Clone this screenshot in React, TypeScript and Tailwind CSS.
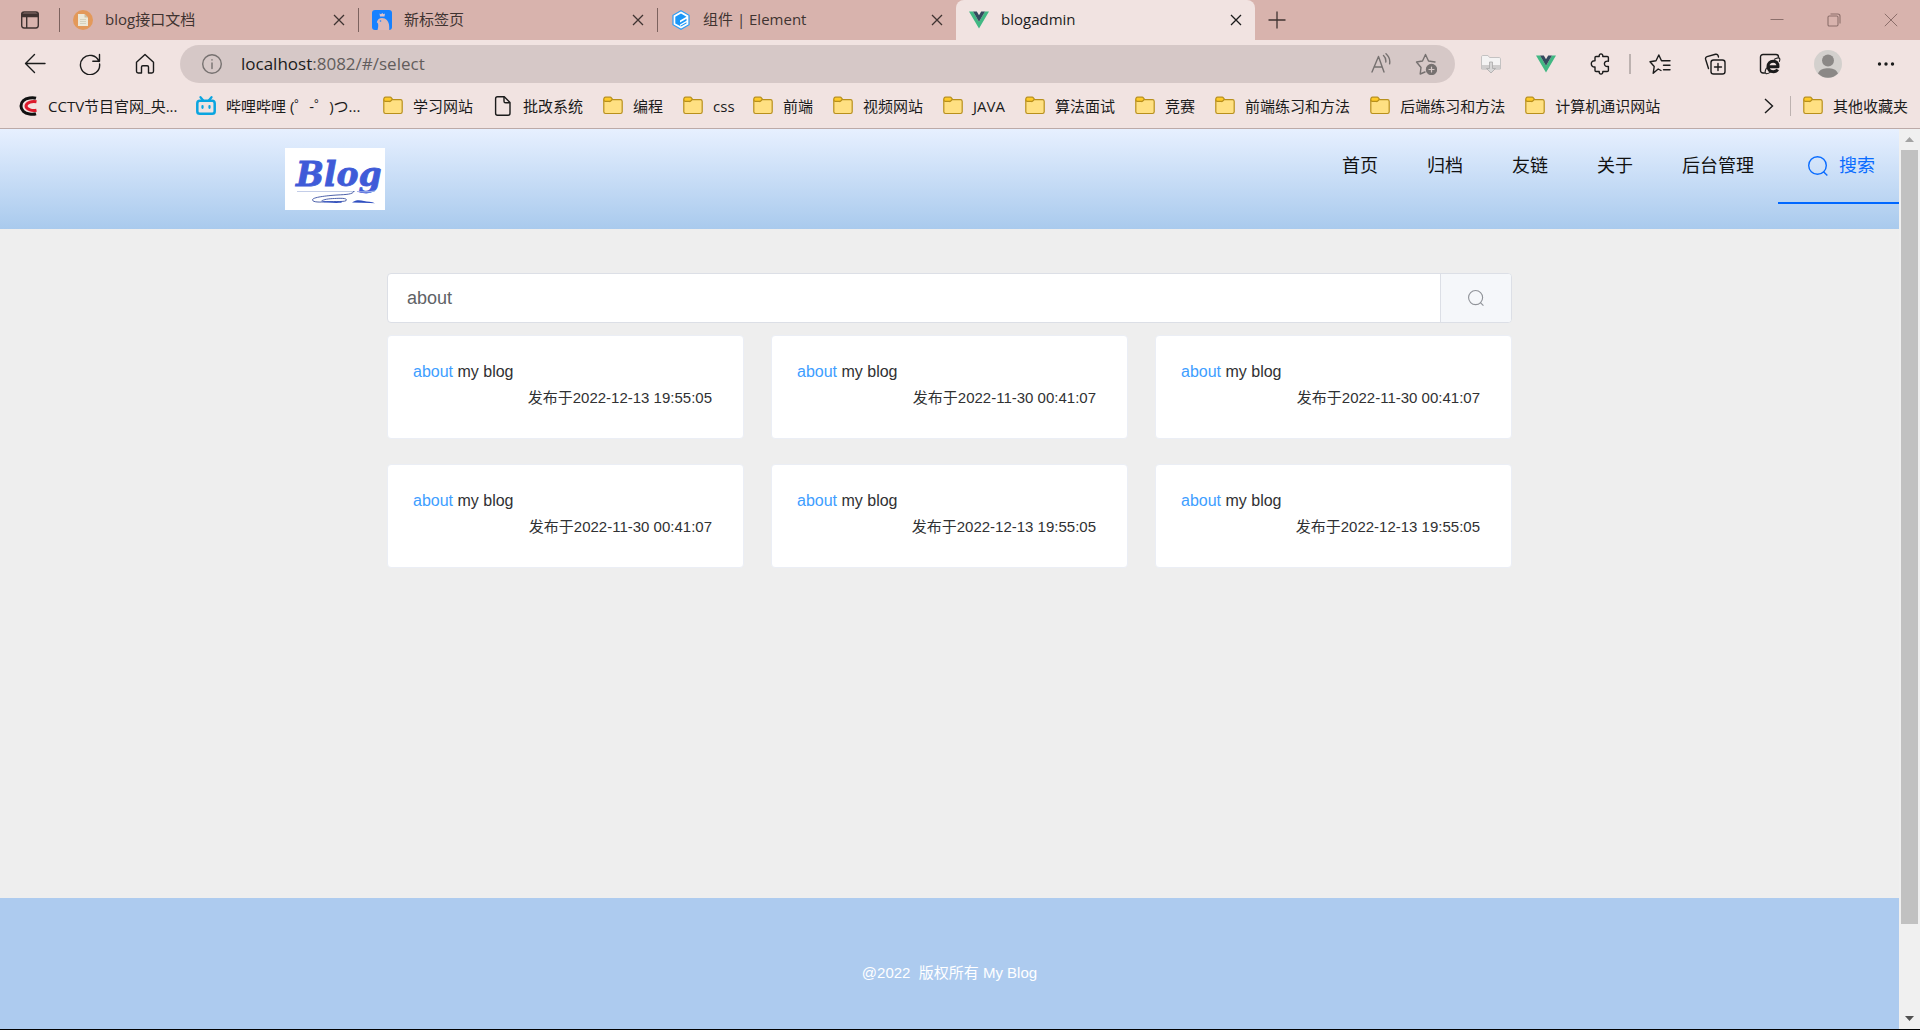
import type { ReactNode } from "react";

const UI_FONT = "font-['Open_Sans','Noto_Sans_CJK_SC',sans-serif]";
const PAGE_FONT = "font-['Liberation_Sans','Noto_Sans_CJK_SC',sans-serif]";

/* ---------- icons ---------- */

function CloseIcon() {
  return (
    <svg width="12" height="12" viewBox="0 0 12 12" stroke="currentColor" strokeWidth="1.3" fill="none">
      <path d="M1 1l10 10M11 1L1 11" />
    </svg>
  );
}

function TabActionsIcon() {
  return (
    <svg width="20" height="20" viewBox="0 0 20 20" fill="none" stroke="#3f3331" strokeWidth="1.4">
      <rect x="1.7" y="2" width="16.6" height="16" rx="2.4" />
      <path d="M2 4h16v2.5H2z" fill="#3f3331" />
      <path d="M6.7 6v12" />
    </svg>
  );
}

function DocFavicon() {
  return (
    <svg width="20" height="20" viewBox="0 0 20 20">
      <circle cx="10" cy="10" r="10" fill="#e3995a" />
      <path d="M5 4h6.500L15 7.500V16H5z" fill="#ece8d8" />
      <path d="M11.500 4v3.500H15z" fill="#c9bfa4" />
      <path d="M7 9.500h6M7 11.500h6M7 13.500h6" stroke="#cfcab6" strokeWidth=".8" />
    </svg>
  );
}

function BearFavicon() {
  return (
    <svg width="20" height="20" viewBox="0 0 20 20">
      <rect width="20" height="20" rx="3" fill="#1681ff" />
      <path d="M7.500 3.400l1.500.9 1.300-1.300 1.200 1.300 1.500-.9-.5 3.200H8z" fill="#dfc3cb" />
      <path d="M5.500 20c.7-2.500 1-4.500.5-6.500l-1.200-1.200C5.500 9.500 7.300 8 10 8c4.200 0 6.300 3 7 6.500.3 2 .3 3.600.2 5.500z" fill="#dcb9b8" />
      <circle cx="8.500" cy="11" r=".8" fill="#1681ff" />
    </svg>
  );
}

function ElementFavicon() {
  return (
    <svg width="20" height="20" viewBox="0 0 20 20">
      <path d="M10 .8l8 4.500v9.400l-8 4.500-8-4.500V5.300z" fill="#fff" stroke="#2c9cf5" strokeWidth="1.200" />
      <path d="M10 3.600l5.500 3.200L9 10.600v1.900l6.500-3.700v1.900L9 14.400v1.500l6.500-3.600v1.100L10 16.600l-5.700-3.200V6.800z" fill="#1b97f7" />
    </svg>
  );
}

function VueLogo() {
  return (
    <svg width="20" height="20" viewBox="0 0 20 20">
      <path d="M0 1.500h4l6 10.300 6-10.300h4l-10 17z" fill="#41b883" />
      <path d="M4 1.500h3.800L10 5.300l2.200-3.800H16l-6 10.300z" fill="#34495e" />
    </svg>
  );
}

function FolderIcon() {
  return (
    <svg width="20" height="20" viewBox="0 0 20 20" strokeWidth="1.200">
      <path d="M.8 4v11.800c0 1 .7 1.700 1.700 1.700h15c1 0 1.700-.7 1.700-1.700V5.400c0-1-.7-1.700-1.700-1.700H8.500L6.800 5.600z" fill="#ffe082" stroke="#b8901c" />
      <path d="M2.500 1.200h4.700c.5 0 1 .4 1.400.9l.7.9c-.6 1.300-1.300 2.300-2.600 2.300H2.300C1.300 5.300.8 4.500.8 3.400S1.400 1.200 2.500 1.200z" fill="#ffca28" stroke="#b8901c" />
    </svg>
  );
}

function CctvIcon() {
  return (
    <svg width="20" height="20" viewBox="0 0 20 20" fill="none">
      <path d="M18 2.200c-2-.6-4-.6-6.500-.2C6.500 2.800 3 5.800 3 10s3.500 7.200 8.500 8c2.500.4 4.500.4 6.500-.2" stroke="#111" strokeWidth="3" />
      <path d="M18.500 5.800c-2-.4-4.500-.4-6.500.3-2.600.9-4 2.200-4 3.900s1.400 3 4 3.900c2 .7 4.500.7 6.500.3" stroke="#dc1a2c" strokeWidth="3" />
    </svg>
  );
}

function BiliIcon() {
  return (
    <svg width="20" height="20" viewBox="0 0 20 20" fill="none" stroke="#0aa5e0" strokeLinecap="round">
      <path d="M4.500 1.200l2.500 3M15.500 1.200l-2.500 3" strokeWidth="2.200" />
      <rect x="1.300" y="4.800" width="17.400" height="13" rx="2.600" strokeWidth="2.500" />
      <path d="M6.500 10v1.800M13.500 10v1.800" strokeWidth="2.200" />
    </svg>
  );
}

function FileIcon() {
  return (
    <svg width="20" height="20" viewBox="0 0 20 20" fill="none" stroke="#1b1b1b" strokeWidth="1.400" strokeLinejoin="round">
      <path d="M4.500.8h6.800L17 6.500v10.800c0 1.100-.8 1.900-1.900 1.900H4.500c-1.100 0-1.900-.8-1.900-1.900V2.700C2.600 1.600 3.400.8 4.500.8z" />
      <path d="M11 1v4.200c0 1 .6 1.600 1.600 1.600h4.200" />
    </svg>
  );
}

function Line({ children, size = 22 }: { children: ReactNode; size?: number }) {
  return (
    <svg width={size} height={size} viewBox="0 0 22 22" fill="none" stroke="currentColor" strokeWidth="1.400" strokeLinecap="round" strokeLinejoin="round">
      {children}
    </svg>
  );
}

function SearchGlyph({ size }: { size: number }) {
  return (
    <svg width={size} height={size} viewBox="0 0 20 20" fill="none" stroke="currentColor" strokeWidth="1.400">
      <circle cx="9.500" cy="9.500" r="8.800" />
      <path d="M15.500 15.800l3.800 3.700" />
    </svg>
  );
}

/* ---------- browser frame ---------- */

const tabs = [
  { title: "blog接口文档", icon: <DocFavicon /> },
  { title: "新标签页", icon: <BearFavicon /> },
  { title: "组件 | Element", icon: <ElementFavicon /> },
];

function TabStrip() {
  return (
    <div className="flex h-10 items-stretch bg-[#d8b3ad] text-[15px] text-[#3f3331]">
      <button aria-label="标签页操作" className="flex w-[59px] shrink-0 items-center justify-center">
        <TabActionsIcon />
      </button>
      {tabs.map((t) => (
        <div key={t.title} className="flex w-[299px] min-w-0 items-center">
          <span className="h-6 w-px shrink-0 bg-[#7c625e]" />
          <span className="ml-[13px] shrink-0">{t.icon}</span>
          <span className="ml-3 flex-1 truncate pb-0.5">{t.title}</span>
          <button aria-label={`关闭 ${t.title}`} className="mr-[13px] shrink-0">
            <CloseIcon />
          </button>
        </div>
      ))}
      <div className="flex w-[299px] min-w-0 items-center rounded-t-lg bg-[#f1e3e1] text-[#1b1b1b]">
        <span className="ml-[13px] shrink-0"><VueLogo /></span>
        <span className="ml-3 flex-1 truncate pb-0.5">blogadmin</span>
        <button aria-label="关闭 blogadmin" className="mr-[13px] shrink-0"><CloseIcon /></button>
      </div>
      <button aria-label="新建标签页" className="flex w-11 shrink-0 items-center justify-center">
        <svg width="18" height="18" viewBox="0 0 18 18" stroke="currentColor" strokeWidth="1.300"><path d="M9 .5v17M.5 9h17" /></svg>
      </button>
      <div className="ml-auto flex pr-px text-[#8c6f6b]">
        <button aria-label="最小化" className="flex w-[57px] items-center justify-center">
          <svg width="14" height="14" viewBox="0 0 14 14" stroke="currentColor"><path d="M.5 6.500h13" /></svg>
        </button>
        <button aria-label="还原" className="flex w-[57px] items-center justify-center">
          <svg width="14" height="14" viewBox="0 0 14 14" fill="none" stroke="currentColor" strokeWidth="1.100">
            <rect x="1" y="3" width="10" height="10" rx="1.200" />
            <path d="M3.500 1h7.300C12.300 1 13 1.800 13 3.200v7.300" />
          </svg>
        </button>
        <button aria-label="关闭" className="flex w-[57px] items-center justify-center">
          <svg width="14" height="14" viewBox="0 0 14 14" stroke="currentColor"><path d="M.8.8l12.400 12.400M13.200.8L.8 13.200" /></svg>
        </button>
      </div>
    </div>
  );
}

function ToolButton({ label, children }: { label: string; children: ReactNode }) {
  return (
    <button aria-label={label} className="flex w-[55px] shrink-0 items-center justify-center">
      {children}
    </button>
  );
}

function Toolbar() {
  return (
    <div className="flex h-12 items-center pl-[7px] pr-[7px] text-[#1b1b1b]">
      <ToolButton label="后退"><Line><path d="M21 10.500H1.500M10.500 1.500l-9 9 9 9" /></Line></ToolButton>
      <ToolButton label="刷新"><Line><path d="M20 8.500A9.600 9.600 0 1 0 20.600 11M20.500 1.500v6.800h-6.700" /></Line></ToolButton>
      <ToolButton label="主页"><Line><path d="M2.500 9.300L11 1.500l8.500 7.800v9c0 1-.7 1.700-1.700 1.700h-3.300v-6c0-.8-.5-1.300-1.300-1.300H8.800c-.8 0-1.300.5-1.300 1.300v6H4.200c-1 0-1.700-.7-1.700-1.700z" /></Line></ToolButton>
      <div className="ml-2 flex h-[38px] min-w-0 flex-1 items-center rounded-full bg-[#d6c8c7] pl-[21px] pr-[18px] text-[#767170]">
        <Line>
          <circle cx="11" cy="11" r="9.300" />
          <path d="M11 10v5.500M11 6.800v.2" />
        </Line>
        <span className="ml-[18px] flex-1 truncate text-[17px] text-[#625d5c]">
          <span className="text-[#1b1b1b]">localhost</span>:8082/#/select
        </span>
        <button aria-label="大声朗读" className="mr-[23px]">
          <Line>
            <path d="M2 19L8.500 3.500 14 19M4 14h8.200M13.500 2.500c1.800 1.700 2.600 4 2.300 6.500M16 .8c3 2.700 4.300 6.200 3.600 10" />
          </Line>
        </button>
        <button aria-label="添加到收藏夹">
          <Line>
            <path d="M10 19l-4.800 2 .8-6.500L1.500 9l6-1L10.500 1.500l3 6.500 6.500 1" />
            <circle cx="16.500" cy="16.500" r="5" fill="currentColor" />
            <path d="M14 16.500h5M16.500 14v5" stroke="#d6c8c7" strokeWidth="1.200" />
          </Line>
        </button>
      </div>
      <div className="ml-2 flex items-center">
        <ToolButton label="下载扩展">
          <svg width="20" height="20" viewBox="0 0 20 20">
            <path d="M.5 3c0-1 .5-1.500 1.500-1.500h5L8.500 3.500H18c1 0 1.500.5 1.500 1.500v10H.5z" fill="#f4f3f3" stroke="#c4c2c2" />
            <path d="M1 11h18v4.500H1z" fill="#cfcdcd" />
            <path d="M8.500 8h3v6.500h3L10 19l-4.500-4.500h3z" fill="#d8d7d7" stroke="#aaa8a8" strokeWidth=".8" />
          </svg>
        </ToolButton>
        <ToolButton label="Vue 开发者工具"><VueLogo /></ToolButton>
        <ToolButton label="扩展">
          <Line>
            <path d="M5 4.500c0-.7.4-1 1-1h3.200C9 1.800 9.800.9 11 .9s2 .9 1.800 2.600h4.400c.7 0 1.200.4 1.200 1.100v3.600c-2.600-.4-4 .7-4 2.600s1.400 3 4 2.600v4c0 .7-.5 1.100-1.200 1.100h-4.400c.2 1.700-.6 2.600-1.800 2.600s-2-.9-1.800-2.600H6c-.6 0-1-.4-1-1V14c-2.400.2-3.700-1.200-3.700-3.200S2.600 7.600 5 7.800z" />
          </Line>
        </ToolButton>
      </div>
      <span className="mx-px h-5 w-0.5 bg-[#bdb2b0]" />
      <ToolButton label="收藏夹">
        <Line>
          <path d="M12 17.500L9.200 16l-5 4.300 1-6.800L1 8.800l6-1L9.800 2l2.700 5.800H21M14.500 12.300H21M14.500 16.800H21" />
        </Line>
      </ToolButton>
      <ToolButton label="集锦">
        <Line>
          <rect x="7" y="7" width="14" height="14" rx="2.600" />
          <path d="M14 10.500v7M10.500 14h7M4.500 15.500L1.600 6.200C1.300 5 1.800 4 3 3.600l8.500-2.300c1.200-.3 2.200.2 2.600 1.300L14.500 4" />
        </Line>
      </ToolButton>
      <ToolButton label="Internet Explorer 模式">
        <Line>
          <path d="M5.500 20H4c-1.500 0-2.500-1-2.500-2.500V4C1.500 2.500 2.500 1.500 4 1.500h13c1.500 0 2.500 1 2.500 2.500" />
          <path d="M9 13.700h10c0-3.500-1.800-5.400-4.800-5.400-3.200 0-5.200 2.200-5.200 5.200 0 3.200 2.200 5.200 5.400 5.200 2 0 3.400-.7 4.300-2.200" strokeWidth="3" strokeLinecap="butt" />
          <path d="M15.500 6.200c3-1.700 5-1.700 5.300-.4.100.7 0 1.600-.4 2.600M7.500 15c-1.700 3-1.800 5.200-.4 5.600 1 .3 2.400-.2 4-1.200" strokeWidth="1.100" />
        </Line>
      </ToolButton>
      <button aria-label="用户配置" className="flex w-[61px] items-center justify-center">
        <svg width="28" height="28" viewBox="0 0 28 28">
          <circle cx="14" cy="14" r="14" fill="#d3d0cd" />
          <circle cx="14" cy="10.500" r="6" fill="#8b8886" />
          <path d="M4 23.500C6 19 10 18.300 14 18.300s8 .7 10 5.200A14 14 0 0 1 4 23.500z" fill="#8b8886" />
        </svg>
      </button>
      <ToolButton label="设置及其他">
        <svg width="18" height="6" viewBox="0 0 18 6" fill="currentColor">
          <circle cx="2.500" cy="3" r="1.700" /><circle cx="9" cy="3" r="1.700" /><circle cx="15.500" cy="3" r="1.700" />
        </svg>
      </ToolButton>
    </div>
  );
}

const bookmarks: { title: string; width?: string; icon?: ReactNode }[] = [
  { title: "CCTV节目官网_央...", width: "w-32", icon: <CctvIcon /> },
  { title: "哔哩哔哩 (゜-゜)つ...", width: "w-[137px]", icon: <BiliIcon /> },
  { title: "学习网站" },
  { title: "批改系统", icon: <FileIcon /> },
  { title: "编程" },
  { title: "css", width: "w-5" },
  { title: "前端" },
  { title: "视频网站" },
  { title: "JAVA", width: "w-8" },
  { title: "算法面试" },
  { title: "竞赛" },
  { title: "前端练习和方法" },
  { title: "后端练习和方法" },
  { title: "计算机通识网站" },
];

function Bookmark({ title, width = "w-auto", icon = <FolderIcon /> }: { title: string; width?: string; icon?: ReactNode }) {
  return (
    <a href="#bookmark" className="flex shrink-0 items-center gap-2.5">
      {icon}
      <span className={`${width} whitespace-nowrap`}>{title}</span>
    </a>
  );
}

function BookmarkBar() {
  return (
    <nav aria-label="收藏夹栏" className="flex h-[41px] items-center border-b border-[#bcaaa8] pb-1 pl-[18px] pr-3 text-[15px] text-[#1b1b1b]">
      <div className="flex min-w-0 flex-1 items-center gap-5 overflow-hidden">
        {bookmarks.map((b) => (
          <Bookmark key={b.title} {...b} />
        ))}
      </div>
      <button aria-label="更多收藏" className="mr-4 shrink-0">
        <svg width="10" height="16" viewBox="0 0 10 16" fill="none" stroke="currentColor" strokeWidth="1.400"><path d="M1 1l7.500 7L1 15" /></svg>
      </button>
      <span className="mr-3 h-5 w-px shrink-0 bg-[#bdb2b0]" />
      <Bookmark title="其他收藏夹" />
    </nav>
  );
}

/* ---------- blog page ---------- */

function BlogLogo() {
  return (
    <svg width="100" height="62" viewBox="0 0 100 62" role="img" aria-label="Blog">
      <rect width="100" height="62" fill="#fff" />
      <text x="11" y="38" fill="#3f5bd8" stroke="#3f5bd8" strokeWidth=".8" fontSize="33" fontWeight="700" fontStyle="italic" fontFamily="DejaVu Serif, serif">Blog</text>
      <path d="M12 43.500h58" stroke="#b4c0e2" strokeWidth=".8" />
      <path d="M69 43c-1 3.500-8 3.500-17 4-10 .7-25 2.200-24.500 5 .4 2.300 7 2.300 14 1.800 9-.6 20 .4 20-1.800 0-2-6-1.800-12-1.500-6 .2-11 1-13 2.500" fill="none" stroke="#3a50a0" strokeWidth=".9" />
      <path d="M36 53.500c8-1 15 .5 22 0l-2 1.300c-6 .3-15 0-20-1.300zM67 54.500c4-3 8-2.500 12-1.500 3 .6 8 .8 11 2.200l-5-.2z" fill="#2f4fc0" />
      <path d="M72 43.500c6 .5 12 .6 18-.5" stroke="#9eb0ea" strokeWidth="1.200" fill="none" />
    </svg>
  );
}

const links = ["首页", "归档", "友链", "关于", "后台管理"];

function SiteHeader() {
  return (
    <header className="flex h-[100px] items-start bg-linear-to-b from-[#e7f0ff] to-[#a9caed]">
      <a href="#home" className="ml-[15%] mt-[19px] shrink-0"><BlogLogo /></a>
      <nav className="ml-auto flex h-[75px] items-stretch text-lg text-[#111]">
        <div className="mr-6 flex items-center gap-[49px] pb-0.5">
          {links.map((l) => (
            <a key={l} href={`#${l}`}>{l}</a>
          ))}
        </div>
        <a href="#select" className="flex items-center gap-[11px] border-b-2 border-[#0067ff] pl-[30px] pr-6 text-[#0a6cff]">
          <SearchGlyph size={20} />
          搜索
        </a>
      </nav>
    </header>
  );
}

const older = "2022-11-30 00:41:07";
const newer = "2022-12-13 19:55:05";
const results = [newer, older, older, older, newer, newer];

function Results() {
  return (
    <main className="mx-auto w-full max-w-[1125px] flex-1 pt-11">
      <form className="flex h-[50px] overflow-hidden rounded border border-[#dcdfe6] bg-white" onSubmit={(e) => e.preventDefault()}>
        <input aria-label="搜索文章" defaultValue="about" className="min-w-0 flex-1 px-[19px] text-lg text-[#606266] outline-none" />
        <button aria-label="搜索" className="flex w-[71px] items-center justify-center border-l border-[#dcdfe6] bg-[#f5f7fa] text-[#909399]">
          <SearchGlyph size={16} />
        </button>
      </form>
      <div className="mt-3 grid grid-cols-3 gap-x-[27px] gap-y-[25px]">
        {results.map((date, i) => (
          <article key={i} className="h-[104px] rounded border border-[#ebeef5] bg-white px-[25px] pt-[22px] text-[#303133]">
            <h2 className="text-base leading-7"><span className="text-[#409eff]">about</span> my blog</h2>
            <p className="pr-1.5 text-right text-[15px] leading-6">发布于{date}</p>
          </article>
        ))}
      </div>
    </main>
  );
}

function Scrollbar() {
  return (
    <div aria-hidden="true" className="flex w-[21px] shrink-0 flex-col items-center bg-[#f0f0f0]">
      <span className="flex h-[21px] items-center">
        <svg width="9" height="5" viewBox="0 0 9 5" fill="#a3a3a3"><path d="M0 5L4.500 0 9 5z" /></svg>
      </span>
      <div className="flex w-[17px] flex-1 flex-col">
        <div className="flex-[37] bg-[#c1c1c1]" />
        <div className="flex-[4]" />
      </div>
      <span className="flex h-[21px] items-center">
        <svg width="9" height="5" viewBox="0 0 9 5" fill="#505050"><path d="M0 0h9L4.500 5z" /></svg>
      </span>
    </div>
  );
}

export default function App() {
  return (
    <div className="flex min-h-screen flex-col border-b border-black bg-[#eeeeee]">
      <div className={`${UI_FONT} bg-[#f1e3e1]`}>
        <TabStrip />
        <Toolbar />
        <BookmarkBar />
      </div>
      <div className={`${PAGE_FONT} flex flex-1 items-stretch`}>
        <div className="flex min-w-0 flex-1 flex-col">
          <SiteHeader />
          <Results />
          <footer className="flex h-[131px] items-center justify-center whitespace-pre bg-[#adcbef] pt-5 text-[15px] text-white">
            @2022  版权所有 My Blog
          </footer>
        </div>
        <Scrollbar />
      </div>
    </div>
  );
}
